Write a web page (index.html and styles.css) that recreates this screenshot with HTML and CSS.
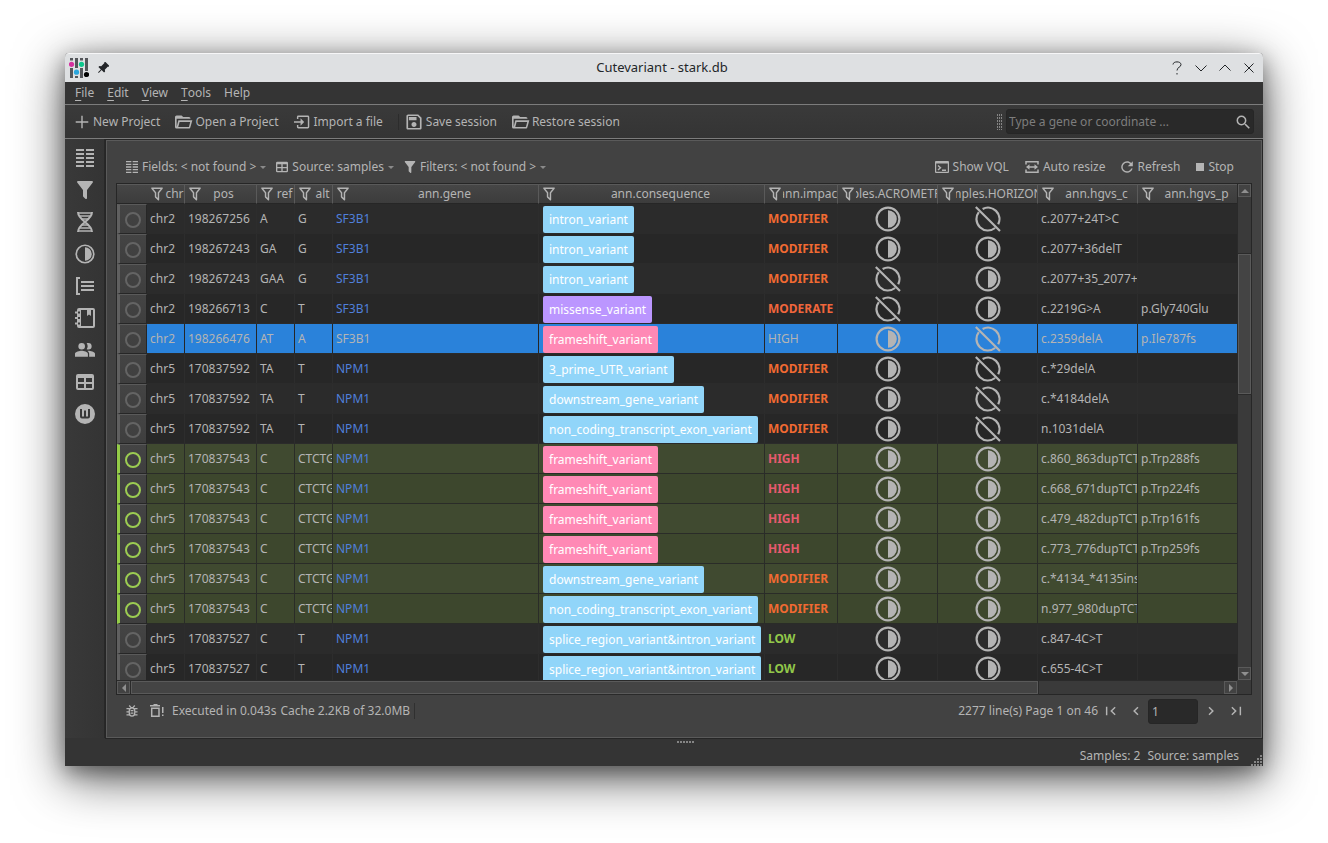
FILE: index.html
```html
<!DOCTYPE html>
<html lang="en">
<head>
<meta charset="utf-8">
<title>Cutevariant - stark.db</title>
<link rel="stylesheet" href="styles.css">
</head>
<body>
<svg class="sprite" aria-hidden="true">
  <symbol id="i-plus" viewBox="2 2 20 20"><path d="M21 13H13V21H11V13H3V11H11V3H13V11H21Z"/></symbol>
  <symbol id="i-folder" viewBox="2 1 22 22"><path d="M6.1,10L4,18V8H21A2,2 0 0,0 19,6H12L10,4H4A2,2 0 0,0 2,6V18A2,2 0 0,0 4,20H19C19.9,20 20.6,19.4 20.8,18.5L23.2,10H6.1M19,18H6L7.6,12H20.6L19,18Z"/></symbol>
  <symbol id="i-import" viewBox="1 1 22 22"><path d="M15,12L10,7V11H1V13H10V17M22,19V5C22,3.9 21.1,3 20,3H7A2,2 0 0,0 5,5V8H7V5H20V19H7V16H5V19A2,2 0 0,0 7,21H20A2,2 0 0,0 22,19Z"/></symbol>
  <symbol id="i-save" viewBox="2.500 2.500 19 19"><path d="M17 3H5C3.89 3 3 3.9 3 5V19C3 20.1 3.89 21 5 21H19C20.1 21 21 20.1 21 19V7L17 3M19 19H5V5H16.17L19 7.83V19M12 12C10.34 12 9 13.34 9 15S10.34 18 12 18 15 16.66 15 15 13.66 12 12 12M6 6H15V10H6V6Z"/></symbol>
  <symbol id="i-filter" viewBox="0 0 24 24"><path d="M14,12V19.88C14.04,20.18 13.94,20.5 13.71,20.71C13.32,21.1 12.69,21.1 12.3,20.71L10.29,18.7C10.06,18.47 9.96,18.16 10,17.87V12H9.97L4.21,4.62C3.87,4.19 3.95,3.56 4.38,3.22C4.57,3.08 4.78,3 5,3H19C19.22,3 19.43,3.08 19.62,3.22C20.05,3.56 20.13,4.19 19.79,4.62L14.03,12H14Z"/></symbol>
  <symbol id="i-funnel" viewBox="1 1 22 22"><path d="M15,19.88C15.04,20.18 14.94,20.5 14.71,20.71C14.32,21.1 13.69,21.1 13.3,20.71L9.29,16.7C9.06,16.47 8.96,16.16 9,15.87V10.75L4.21,4.62C3.87,4.19 3.95,3.56 4.38,3.22C4.57,3.08 4.78,3 5,3H19C19.22,3 19.43,3.08 19.62,3.22C20.05,3.56 20.13,4.19 19.79,4.62L15,10.75V19.88M7.04,5L11,10.06V15.58L13,17.58V10.05L16.96,5H7.04Z"/></symbol>
  <symbol id="i-fields" viewBox="0 0 18 18"><path d="M0 0H8V2H0ZM0 4H8V6H0ZM0 8H8V10H0ZM0 12H8V14H0ZM0 16H8V18H0ZM10 0H18V2H10ZM10 4H18V6H10ZM10 8H18V10H10ZM10 12H18V14H10ZM10 16H18V18H10Z"/></symbol>
  <symbol id="i-table" viewBox="0 0 18 16"><path fill-rule="evenodd" d="M2 0H16A2 2 0 0 1 18 2V14A2 2 0 0 1 16 16H2A2 2 0 0 1 0 14V2A2 2 0 0 1 2 0ZM2 4V8H8V4ZM10 4V8H16V4ZM2 10V14H8V10ZM10 10V14H16V10Z"/></symbol>
  <symbol id="i-dna" viewBox="0 0 20 22"><g fill="none" stroke="currentColor" stroke-width="2"><path d="M3 1C3 10 17 12 17 21M17 1C17 10 3 12 3 21"/><path stroke-width="1.4" d="M3 2H17M4 5H16M6 8H14M6 14H14M4 17H16M3 20H17"/></g></symbol>
  <symbol id="i-half" viewBox="0 0 26 26"><circle cx="13" cy="13" r="11.4" fill="none" stroke="currentColor" stroke-width="2.2"/><path d="M13 4.2A8.8 8.8 0 0 1 13 21.8Z"/></symbol>
  <symbol id="i-none" viewBox="0 0 26 26"><path fill="none" stroke="currentColor" stroke-width="2.2" d="M.8 1L25 25M7.6 3A11.4 11.4 0 0 1 23.2 18.2M3.8 6.2A11.4 11.4 0 0 0 20 22"/></symbol>
  <symbol id="i-group" viewBox="0 0 18 18"><path d="M0 0H4V2H2V16H4V18H0ZM5 4H18V6H5ZM5 8H18V10H5ZM5 12H18V14H5Z"/></symbol>
  <symbol id="i-book" viewBox="0 0 20 20"><path fill-rule="evenodd" d="M4 0H18A2 2 0 0 1 20 2V18A2 2 0 0 1 18 20H4A2 2 0 0 1 2 18V16.5H0V14.5H2V11H0V9H2V5.5H0V3.5H2V2A2 2 0 0 1 4 0ZM6 2V18H18V2H16V8L14 6.5L12 8V2ZM3 3.500V5.500H5V3.500ZM3 9V11H5V9ZM3 14.500V16.500H5V14.500Z"/></symbol>
  <symbol id="i-people" viewBox="0 0 24 24"><path d="M16,13C15.71,13 15.38,13 15.03,13.05C16.19,13.89 17,15 17,16.5V20H24V16.5C24,14.17 18.33,13 16,13M8,13C5.67,13 0,14.17 0,16.5V20H15.500V16.5C15.500,14.17 10.33,13 8,13M8,11.500A4,4 0 1,0 8,3.500A4,4 0 1,0 8,11.500M16,11.500A4,4 0 0,0 16,3.500C15.400,3.500 14.600,3.700 14,4C15.600,6.200 15.600,8.800 14,11C14.600,11.300 15.400,11.500 16,11.500Z"/></symbol>
  <symbol id="i-wordset" viewBox="0 0 20 20"><path fill-rule="evenodd" d="M10 0A10 10 0 1 1 10 20A10 10 0 1 1 10 0ZM5 5V12.500A2 2 0 0 0 7 14.500H13A2 2 0 0 0 15 12.500V5H13V12.500H11V6.500H9V12.500H7V5Z"/></symbol>
  <symbol id="i-console" viewBox="0 0 14 12"><path fill-rule="evenodd" d="M1 0H13A1 1 0 0 1 14 1V11A1 1 0 0 1 13 12H1A1 1 0 0 1 0 11V1A1 1 0 0 1 1 0ZM1.200 2.500V10.800H12.800V2.500Z"/><path fill="none" stroke="currentColor" stroke-width="1.400" d="M3 4.500L5.500 6.700L3 9M7 9.300H11"/></symbol>
  <symbol id="i-resize" viewBox="0 0 14 12"><path fill="none" stroke="currentColor" stroke-width="1.500" d="M1 3.500V.8H13V3.500M1 8.500V11.200H13V8.500M3 6H11"/><path d="M1 6L4.500 3.300V8.700ZM13 6L9.500 3.300V8.700Z"/></symbol>
  <symbol id="i-refresh" viewBox="1 1 22 22"><path d="M17.65,6.35C16.2,4.9 14.21,4 12,4A8,8 0 0,0 4,12A8,8 0 0,0 12,20C15.73,20 18.84,17.45 19.73,14H17.65C16.83,16.33 14.61,18 12,18A6,6 0 0,1 6,12A6,6 0 0,1 12,6C13.66,6 15.14,6.69 16.22,7.78L13,11H20V4L17.65,6.35Z"/></symbol>
  <symbol id="i-search" viewBox="1 1 21 21"><path d="M9.5,3A6.5,6.5 0 0,1 16,9.5C16,11.11 15.41,12.59 14.44,13.73L14.71,14H15.5L20.5,19L19,20.5L14,15.5V14.71L13.73,14.44C12.59,15.41 11.11,16 9.5,16A6.5,6.5 0 0,1 3,9.5A6.5,6.5 0 0,1 9.5,3M9.5,5C7,5 5,7 5,9.5C5,12 7,14 9.5,14C12,14 14,12 14,9.5C14,7 12,5 9.5,5Z"/></symbol>
  <symbol id="i-bug" viewBox="0.500 0.500 13 13"><path fill="none" stroke="currentColor" stroke-width="1.400" d="M7 3.500C9.500 3.500 10 5 10 7V9C10 11.500 9 12.500 7 12.500S4 11.500 4 9V7C4 5 4.500 3.500 7 3.500ZM4 1L6 3.300M10 1L8 3.300M1 4.500H4M1 8H4M1 11.300H4M10 4.500H13M10 8H13M10 11.300H13M5.500 6.700H8.500M5.500 9.300H8.500"/></symbol>
  <symbol id="i-trash" viewBox="0 0 14 14"><path d="M0 1H3L4 0H7L8 1H10V2.500H0ZM12 3H13.500V9H12ZM12 10.500H13.500V12H12Z"/><path fill="none" stroke="currentColor" stroke-width="1.500" d="M1.700 4.200H9V12.200H1.700Z"/></symbol>
  <symbol id="i-prev" viewBox="1 1 22 22"><path d="M15.41,16.58L10.83,12L15.41,7.41L14,6L8,12L14,18L15.41,16.58Z"/></symbol>
  <symbol id="i-next" viewBox="1 1 22 22"><path d="M8.59,16.58L13.17,12L8.59,7.41L10,6L16,12L10,18L8.59,16.58Z"/></symbol>
  <symbol id="i-first" viewBox="1 1 22 22"><path d="M18.41,16.59L13.82,12L18.41,7.41L17,6L11,12L17,18L18.41,16.59M5,6H7V18H5V6Z"/></symbol>
  <symbol id="i-last" viewBox="1 1 22 22"><path d="M5.59,7.41L10.18,12L5.59,16.59L7,18L13,12L7,6L5.59,7.41M17,6H19V18H17V6Z"/></symbol>
  <symbol id="i-pin" viewBox="0 0 24 24"><path transform="rotate(45 12 12)" d="M17,12V3H18V0H6V3H7V12L4,14V17H11V25H13V17H20V14L17,12Z"/></symbol>
</svg>

<div class="window">
  <header class="titlebar">
    <div class="title-left">
      <svg class="logo" viewBox="0 0 20 20"><path fill="#54565a" d="M1 0H4V20H1ZM6 0H9V20H6ZM11 0H14V20H11ZM16 0H19V20H16Z"/><path fill="#dee0e2" d="M0 2.500H5V10H0ZM5 10H10V18H5ZM10 2.500H15V10H10ZM15 13H20V20H15Z"/><circle cx="2.500" cy="6.300" r="2.600" fill="#d6309f"/><circle cx="7.500" cy="14.200" r="2.600" fill="#2aa5dc"/><circle cx="12.500" cy="6.300" r="2.600" fill="#0dc78d"/><circle cx="17.500" cy="16.500" r="2.600" fill="#000"/></svg>
      <svg class="pin"><use href="#i-pin"/></svg>
    </div>
    <h1 class="title">Cutevariant - stark.db</h1>
    <div class="title-buttons">
      <button aria-label="Help"><svg viewBox="0 0 12 14"><path d="M2 3.500C2 0 10 0 10 3.500C10 6.500 6 6 6 9.500M6 12V13.500"/></svg></button>
      <button aria-label="Minimize"><svg viewBox="0 0 12 14"><path d="M.5 4.500L6 10L11.500 4.500"/></svg></button>
      <button aria-label="Maximize"><svg viewBox="0 0 12 14"><path d="M.5 9.500L6 4L11.500 9.500"/></svg></button>
      <button aria-label="Close"><svg viewBox="0 0 12 14"><path d="M1.500 2.500L10.500 11.500M10.500 2.500L1.500 11.500"/></svg></button>
    </div>
  </header>

  <nav class="menubar">
    <button><u>F</u>ile</button><button><u>E</u>dit</button><button><u>V</u>iew</button><button><u>T</u>ools</button><button>Help</button>
  </nav>

  <div class="toolbar">
    <button><svg class="ic14"><use href="#i-plus"/></svg>New Project</button>
    <button class="wide"><svg class="ic18"><use href="#i-folder"/></svg>Open a Project</button>
    <button><svg class="ic16"><use href="#i-import"/></svg>Import a file</button>
    <span class="sep"></span>
    <button><svg class="ic16"><use href="#i-save"/></svg>Save session</button>
    <button class="wide"><svg class="ic18"><use href="#i-folder"/></svg>Restore session</button>
    <span class="grip"></span>
    <label class="search"><input type="text" aria-label="Search gene or coordinate" placeholder="Type a gene or coordinate ..."><svg class="ic16"><use href="#i-search"/></svg></label>
  </div>

  <div class="workspace">
    <aside class="sidebar">
      <button aria-label="Fields"><svg class="ic18"><use href="#i-fields"/></svg></button>
      <button aria-label="Filters"><svg class="ic24"><use href="#i-filter"/></svg></button>
      <button aria-label="Variants"><svg class="ic20"><use href="#i-dna"/></svg></button>
      <button aria-label="Genotypes"><svg class="ic20"><use href="#i-half"/></svg></button>
      <button aria-label="Group by"><svg class="ic18"><use href="#i-group"/></svg></button>
      <button aria-label="History"><svg class="ic20"><use href="#i-book"/></svg></button>
      <button aria-label="Samples"><svg class="ic20"><use href="#i-people"/></svg></button>
      <button aria-label="Source"><svg class="ic18"><use href="#i-table"/></svg></button>
      <button aria-label="Wordsets"><svg class="ic20"><use href="#i-wordset"/></svg></button>
    </aside>

    <main class="panel">
      <div class="viewbar">
        <button class="drop"><svg class="ic12"><use href="#i-fields"/></svg>Fields: &lt; not found &gt;</button>
        <button class="drop"><svg class="ic12"><use href="#i-table"/></svg>Source: samples</button>
        <button class="drop"><svg class="ic16 snug"><use href="#i-filter"/></svg>Filters: &lt; not found &gt;</button>
        <span class="fill"></span>
        <button><svg class="ic14"><use href="#i-console"/></svg>Show VQL</button>
        <button><svg class="ic14"><use href="#i-resize"/></svg>Auto resize</button>
        <button><svg class="ic16 snug"><use href="#i-refresh"/></svg>Refresh</button>
        <button><svg class="ic8" viewBox="0 0 8 8"><path d="M0 0H8V8H0Z"/></svg>Stop</button>
      </div>

      <div class="grid">
        <div class="table-view">
          <table>
            <colgroup><col class="c-mark"><col class="c-s"><col class="c-pos"><col class="c-s"><col class="c-s"><col class="c-gene"><col class="c-cons"><col class="c-imp"><col class="c-m"><col class="c-m"><col class="c-m"><col class="c-m"></colgroup>
            <thead><tr>
              <td></td>
              <th><div class="h"><svg class="ic16"><use href="#i-funnel"/></svg><span>chr</span></div></th>
              <th><div class="h sorted"><svg class="ic16"><use href="#i-funnel"/></svg><span>pos</span></div></th>
              <th><div class="h"><svg class="ic16"><use href="#i-funnel"/></svg><span>ref</span></div></th>
              <th><div class="h"><svg class="ic16"><use href="#i-funnel"/></svg><span>alt</span></div></th>
              <th><div class="h"><svg class="ic16"><use href="#i-funnel"/></svg><span>ann.gene</span></div></th>
              <th><div class="h"><svg class="ic16"><use href="#i-funnel"/></svg><span>ann.consequence</span></div></th>
              <th><div class="h"><svg class="ic16"><use href="#i-funnel"/></svg><span>ann.impact</span></div></th>
              <th><div class="h"><svg class="ic16"><use href="#i-funnel"/></svg><span>ples.ACROMETR</span></div></th>
              <th><div class="h"><svg class="ic16"><use href="#i-funnel"/></svg><span>mples.HORIZON</span></div></th>
              <th><div class="h"><svg class="ic16"><use href="#i-funnel"/></svg><span>ann.hgvs_c</span></div></th>
              <th><div class="h"><svg class="ic16"><use href="#i-funnel"/></svg><span>ann.hgvs_p</span></div></th>
            </tr></thead>
            <tbody>
              <tr><th><i></i></th><td>chr2</td><td>198267256</td><td>A</td><td>G</td><td class="gene">SF3B1</td><td class="cons"><span>intron_variant</span></td><td class="modifier">MODIFIER</td><td class="gt"><svg><use href="#i-half"/></svg></td><td class="gt"><svg><use href="#i-none"/></svg></td><td>c.2077+24T&gt;C</td><td></td></tr>
              <tr><th><i></i></th><td>chr2</td><td>198267243</td><td>GA</td><td>G</td><td class="gene">SF3B1</td><td class="cons"><span>intron_variant</span></td><td class="modifier">MODIFIER</td><td class="gt"><svg><use href="#i-half"/></svg></td><td class="gt"><svg><use href="#i-half"/></svg></td><td>c.2077+36delT</td><td></td></tr>
              <tr><th><i></i></th><td>chr2</td><td>198267243</td><td>GAA</td><td>G</td><td class="gene">SF3B1</td><td class="cons"><span>intron_variant</span></td><td class="modifier">MODIFIER</td><td class="gt"><svg><use href="#i-none"/></svg></td><td class="gt"><svg><use href="#i-half"/></svg></td><td>c.2077+35_2077+3</td><td></td></tr>
              <tr><th><i></i></th><td>chr2</td><td>198266713</td><td>C</td><td>T</td><td class="gene">SF3B1</td><td class="cons"><span class="missense">missense_variant</span></td><td class="moderate">MODERATE</td><td class="gt"><svg><use href="#i-none"/></svg></td><td class="gt"><svg><use href="#i-half"/></svg></td><td>c.2219G&gt;A</td><td>p.Gly740Glu</td></tr>
              <tr class="selected"><th><i></i></th><td>chr2</td><td>198266476</td><td>AT</td><td>A</td><td class="gene">SF3B1</td><td class="cons"><span class="frameshift">frameshift_variant</span></td><td>HIGH</td><td class="gt"><svg><use href="#i-half"/></svg></td><td class="gt"><svg><use href="#i-none"/></svg></td><td>c.2359delA</td><td>p.Ile787fs</td></tr>
              <tr><th><i></i></th><td>chr5</td><td>170837592</td><td>TA</td><td>T</td><td class="gene">NPM1</td><td class="cons"><span>3_prime_UTR_variant</span></td><td class="modifier">MODIFIER</td><td class="gt"><svg><use href="#i-half"/></svg></td><td class="gt"><svg><use href="#i-none"/></svg></td><td>c.*29delA</td><td></td></tr>
              <tr><th><i></i></th><td>chr5</td><td>170837592</td><td>TA</td><td>T</td><td class="gene">NPM1</td><td class="cons"><span>downstream_gene_variant</span></td><td class="modifier">MODIFIER</td><td class="gt"><svg><use href="#i-half"/></svg></td><td class="gt"><svg><use href="#i-none"/></svg></td><td>c.*4184delA</td><td></td></tr>
              <tr><th><i></i></th><td>chr5</td><td>170837592</td><td>TA</td><td>T</td><td class="gene">NPM1</td><td class="cons"><span>non_coding_transcript_exon_variant</span></td><td class="modifier">MODIFIER</td><td class="gt"><svg><use href="#i-half"/></svg></td><td class="gt"><svg><use href="#i-none"/></svg></td><td>n.1031delA</td><td></td></tr>
              <tr class="fav"><th><i></i></th><td>chr5</td><td>170837543</td><td>C</td><td>CTCTG</td><td class="gene">NPM1</td><td class="cons"><span class="frameshift">frameshift_variant</span></td><td class="high">HIGH</td><td class="gt"><svg><use href="#i-half"/></svg></td><td class="gt"><svg><use href="#i-half"/></svg></td><td>c.860_863dupTCTG</td><td>p.Trp288fs</td></tr>
              <tr class="fav"><th><i></i></th><td>chr5</td><td>170837543</td><td>C</td><td>CTCTG</td><td class="gene">NPM1</td><td class="cons"><span class="frameshift">frameshift_variant</span></td><td class="high">HIGH</td><td class="gt"><svg><use href="#i-half"/></svg></td><td class="gt"><svg><use href="#i-half"/></svg></td><td>c.668_671dupTCTG</td><td>p.Trp224fs</td></tr>
              <tr class="fav"><th><i></i></th><td>chr5</td><td>170837543</td><td>C</td><td>CTCTG</td><td class="gene">NPM1</td><td class="cons"><span class="frameshift">frameshift_variant</span></td><td class="high">HIGH</td><td class="gt"><svg><use href="#i-half"/></svg></td><td class="gt"><svg><use href="#i-half"/></svg></td><td>c.479_482dupTCTG</td><td>p.Trp161fs</td></tr>
              <tr class="fav"><th><i></i></th><td>chr5</td><td>170837543</td><td>C</td><td>CTCTG</td><td class="gene">NPM1</td><td class="cons"><span class="frameshift">frameshift_variant</span></td><td class="high">HIGH</td><td class="gt"><svg><use href="#i-half"/></svg></td><td class="gt"><svg><use href="#i-half"/></svg></td><td>c.773_776dupTCTG</td><td>p.Trp259fs</td></tr>
              <tr class="fav"><th><i></i></th><td>chr5</td><td>170837543</td><td>C</td><td>CTCTG</td><td class="gene">NPM1</td><td class="cons"><span>downstream_gene_variant</span></td><td class="modifier">MODIFIER</td><td class="gt"><svg><use href="#i-half"/></svg></td><td class="gt"><svg><use href="#i-half"/></svg></td><td>c.*4134_*4135insT</td><td></td></tr>
              <tr class="fav"><th><i></i></th><td>chr5</td><td>170837543</td><td>C</td><td>CTCTG</td><td class="gene">NPM1</td><td class="cons"><span>non_coding_transcript_exon_variant</span></td><td class="modifier">MODIFIER</td><td class="gt"><svg><use href="#i-half"/></svg></td><td class="gt"><svg><use href="#i-half"/></svg></td><td>n.977_980dupTCTG</td><td></td></tr>
              <tr><th><i></i></th><td>chr5</td><td>170837527</td><td>C</td><td>T</td><td class="gene">NPM1</td><td class="cons"><span>splice_region_variant&amp;intron_variant</span></td><td class="low">LOW</td><td class="gt"><svg><use href="#i-half"/></svg></td><td class="gt"><svg><use href="#i-half"/></svg></td><td>c.847-4C&gt;T</td><td></td></tr>
              <tr><th><i></i></th><td>chr5</td><td>170837527</td><td>C</td><td>T</td><td class="gene">NPM1</td><td class="cons"><span>splice_region_variant&amp;intron_variant</span></td><td class="low">LOW</td><td class="gt"><svg><use href="#i-half"/></svg></td><td class="gt"><svg><use href="#i-half"/></svg></td><td>c.655-4C&gt;T</td><td></td></tr>
            </tbody>
          </table>
        </div>
        <div class="vscroll">
          <button aria-label="Scroll up"><svg viewBox="0 0 8 4"><path d="M4 0L8 4H0Z"/></svg></button>
          <div class="vtrack"><div class="vthumb"></div></div>
          <button aria-label="Scroll down"><svg viewBox="0 0 8 4"><path d="M4 4L8 0H0Z"/></svg></button>
        </div>
        <div class="hscroll">
          <button aria-label="Scroll left"><svg viewBox="0 0 4 8"><path d="M0 4L4 0V8Z"/></svg></button>
          <div class="htrack"><div class="hthumb"></div></div>
          <button aria-label="Scroll right"><svg viewBox="0 0 4 8"><path d="M4 4L0 0V8Z"/></svg></button>
        </div>
        <div class="corner"></div>
      </div>

      <div class="footer">
        <button class="debug" aria-label="Debug"><svg class="ic12"><use href="#i-bug"/></svg></button>
        <button class="clear" aria-label="Clear cache"><svg class="ic14"><use href="#i-trash"/></svg></button>
        <span class="timing">Executed in 0.043s</span>
        <span class="cache">Cache 2.2KB of 32.0MB</span>
        <span class="fill"></span>
        <span>2277 line(s) Page 1 on 46</span>
        <button class="page" aria-label="First page"><svg class="ic16"><use href="#i-first"/></svg></button>
        <button class="page" aria-label="Previous page"><svg class="ic16"><use href="#i-prev"/></svg></button>
        <input class="page-no" type="text" aria-label="Page" value="1">
        <button class="page" aria-label="Next page"><svg class="ic16"><use href="#i-next"/></svg></button>
        <button class="page" aria-label="Last page"><svg class="ic16"><use href="#i-last"/></svg></button>
      </div>
    </main>
  </div>

  <div class="splitter"><span></span></div>
  <footer class="statusbar"><span>Samples: 2</span><span>Source: samples</span>
    <svg class="sizegrip" viewBox="0 0 12 12"><path d="M0 10H2V12H0ZM3 10H5V12H3ZM6 10H8V12H6ZM9 10H11V12H9ZM3 7H5V9H3ZM6 7H8V9H6ZM9 7H11V9H9ZM6 4H8V6H6ZM9 4H11V6H9ZM9 1H11V3H9Z"/></svg>
  </footer>
</div>
</body>
</html>
```
FILE: styles.css
```css
* { box-sizing: border-box; }
body {
  margin: 0;
  height: 100vh;
  padding: 53px 65px 77px;
  background: #fff;
  color: #b4b4b4;
  font: 12px/16px "Noto Sans", sans-serif;
  overflow: hidden;
}
.sprite { position: absolute; width: 0; height: 0; }
svg { fill: currentColor; flex: none; display: block; }
button {
  display: flex;
  align-items: center;
  margin: 0;
  padding: 0;
  border: 0;
  background: none;
  color: inherit;
  font: inherit;
  white-space: nowrap;
}
.ic8 { width: 8px; height: 8px; }
.ic12 { width: 12px; height: 12px; }
.ic14 { width: 14px; height: 14px; }
.ic16 { width: 16px; height: 16px; }
.ic18 { width: 18px; height: 18px; }
.ic20 { width: 20px; height: 20px; }
.ic24 { width: 24px; height: 24px; }

.window {
  display: flex;
  flex-direction: column;
  height: 100%;
  background: #343434;
  border-radius: 4px 4px 0 0;
  box-shadow: 0 12px 50px rgba(0, 0, 0, .65), 0 6px 20px rgba(0, 0, 0, .35);
}

.titlebar {
  display: grid;
  grid-template-columns: 1fr auto 1fr;
  align-items: center;
  height: 29px;
  padding: 0 8px 0 4px;
  border-top: 1px solid #f6f6f7;
  border-radius: 4px 4px 0 0;
  background: #dee0e2;
  color: #232629;
}
.title-left { display: flex; align-items: center; gap: 8px; }
.logo { width: 20px; height: 20px; }
.pin { width: 12px; height: 12px; }
.title { margin: 0 0 2px; font-size: 13px; font-weight: 400; line-height: 18px; }
.title-buttons { display: flex; justify-content: flex-end; gap: 12px; }
.title-buttons svg { width: 12px; height: 14px; fill: none; stroke: currentColor; }

.menubar {
  display: flex;
  gap: 13px;
  height: 23px;
  padding: 0 10px;
  border-bottom: 1px solid #7c7c7c;
}
.menubar u { text-underline-offset: 3px; }

.toolbar {
  display: flex;
  align-items: center;
  gap: 15px;
  height: 34px;
  padding: 0 9px 0 10px;
  border-bottom: 1px solid #7c7c7c;
  background: linear-gradient(#3a3a3a, #343434);
}
.toolbar button { gap: 4px; }
.toolbar .wide { gap: 2px; }
.sep { width: 1px; height: 16px; margin-right: -8px; background: #2c2c2c; }
.grip {
  width: 6px;
  height: 17px;
  margin: 0 -12px 0 auto;
  background:
    repeating-linear-gradient(#383838 0 1px, transparent 1px 3px),
    repeating-linear-gradient(90deg, #858585 0 1px, #383838 1px 2px);
}
.search {
  display: flex;
  align-items: center;
  width: 248px;
  height: 25px;
  padding: 0 2px;
  border: 1px solid #262626;
  border-radius: 3px;
  background: #292929;
}
.search input {
  flex: 1;
  min-width: 0;
  padding: 0;
  border: 0;
  background: none;
  color: inherit;
  font: inherit;
}
.search input::placeholder { color: #7d7d7d; opacity: 1; }

.workspace { display: flex; flex: 1; min-height: 0; }
.sidebar {
  display: flex;
  flex-direction: column;
  width: 40px;
  padding-top: 3px;
  background: linear-gradient(90deg, #393939, #343434);
  border-right: 1px solid #282828;
}
.sidebar button { justify-content: center; height: 32px; }
.sidebar .ic20 { height: 22px; }

.panel {
  display: flex;
  flex: 1;
  flex-direction: column;
  min-width: 0;
  margin: 1px 1px 0;
  border: 1px solid #5a5a5a;
  background: #424242;
  outline: 1px solid #262626;
}
.viewbar {
  display: flex;
  align-items: center;
  gap: 16px;
  height: 42px;
  padding: 10px 27px 0 19px;
}
.viewbar button { gap: 4px; }
.viewbar .drop { margin-right: -6px; }
.drop::after, .sorted::after {
  content: "";
  border: 3px solid transparent;
  border-top-color: #8a8a8a;
  border-bottom: 0;
}
.snug { margin: 0 -2px; }
.fill { flex: 1; }

.grid {
  display: grid;
  flex: 1;
  grid-template-columns: 1fr 14px;
  grid-template-rows: 1fr 14px;
  min-height: 0;
  margin: 0 9px;
  border: 1px solid #262626;
}
.table-view { min-width: 0; min-height: 0; overflow: hidden; background: #282828; }
table { width: 100%; table-layout: fixed; border-collapse: separate; border-spacing: 0; }
.c-mark { width: 30px; }
.c-s { width: 38px; }
.c-pos { width: 72px; }
.c-gene { width: 206px; }
.c-cons { width: 226px; }
.c-imp { width: 73px; }
.c-m { width: 100px; }
thead th, thead td {
  height: 20px;
  padding: 0;
  border-top: 1px solid #5a5a5a;
  border-right: 1px solid #5a5a5a;
  border-bottom: 1px solid #262626;
  background: linear-gradient(#464646, #3c3c3c);
  font-weight: 400;
}
thead td { border-right: 0; }
.h { display: flex; align-items: center; height: 18px; padding-left: 2px; }
.h span { display: flex; flex: 1; justify-content: center; min-width: 0; overflow: hidden; white-space: nowrap; }
.sorted::after { margin: 0 4px 0 0; border-width: 0 4px 4px; border-color: transparent transparent #8a8a8a; }

tbody td {
  height: 30px;
  padding: 0 0 0 3px;
  overflow: hidden;
  border-right: 1px solid #2d2d2d;
  border-bottom: 1px solid #2b2b2b;
  background: #2b2b2b;
  white-space: nowrap;
}
tbody tr:nth-child(even) td { background: #272727; }
tbody th {
  padding: 2px 0 0;
  border-top: 1px solid #5a5a5a;
  border-right: 1px solid #262626;
  border-bottom: 1px solid #262626;
  border-left: 3px solid #606060;
  background: linear-gradient(#444, #3e3e3e);
}
tbody th i { display: block; width: 16px; height: 16px; margin: 0 auto; border: 2px solid #646464; border-radius: 50%; }
tbody .gene { color: #5080dc; }
tbody .cons { padding: 2px 0 0 4px; }
.cons span {
  display: block;
  width: fit-content;
  height: 27px;
  padding: 0 6px;
  border-radius: 2px;
  background: #91d5f9;
  color: #fff;
  line-height: 27px;
}
.cons .missense { background: #bb96ff; }
.cons .frameshift { background: #ff89b5; }
.modifier, .moderate, .high, .low { font-weight: 700; }
.modifier { color: #f06a32; }
.moderate { color: #f0663c; }
.high { color: #e65a6e; }
.low { color: #92c84a; }
tbody .gt { padding: 0; }
.gt svg { width: 26px; height: 26px; margin: 0 auto; }
tbody .fav td, tbody .fav:nth-child(even) td { border-color: #2a2c28; background: #404a30; }
tbody .fav:nth-child(even) td { background: #3d472d; }
tbody .fav th { border-left-color: #94cc48; }
tbody .fav th i { border-color: #9ccc52; }
tbody .selected td { border-right-color: #262626; background: #2a82da; }
tbody .selected .gene { color: #b4b4b4; }

.vscroll, .hscroll { display: flex; background: #3a3a3a; }
.vscroll { flex-direction: column; border-left: 1px solid #2a2a2a; }
.hscroll { border-top: 1px solid #2a2a2a; }
.vscroll button, .hscroll button {
  flex: none;
  justify-content: center;
  width: 13px;
  height: 13px;
  border: 1px solid #5a5a5a;
  background: #424242;
  color: #8f8f8f;
}
.vscroll button svg { width: 8px; height: 4px; }
.hscroll button svg { width: 4px; height: 8px; }
.vtrack { flex: 1; padding-top: 57px; }
.vthumb { height: 34%; border: 1px solid #5a5a5a; background: #444; outline: 1px solid #2a2a2a; }
.htrack { flex: 1; padding-left: 1px; }
.hthumb { width: 83%; height: 100%; border: 1px solid #5a5a5a; background: #444; outline: 1px solid #2a2a2a; }
.corner { background: #3a3a3a; }

.footer { display: flex; align-items: center; height: 42px; padding: 0 13px 10px 19px; }
.footer .debug { margin-right: 12px; }
.footer .clear { margin-right: 8px; }
.footer .timing { margin-right: 4px; }
.footer .cache { padding-right: 4px; border-right: 1px solid #303030; }
.footer .page { justify-content: center; width: 25px; }
.page-no {
  width: 50px;
  height: 25px;
  padding: 0 3px;
  border: 1px solid #262626;
  border-radius: 3px;
  background: #292929;
  color: inherit;
  font: inherit;
}

.splitter { display: flex; justify-content: center; align-items: center; height: 8px; padding-left: 43px; }
.splitter span { width: 18px; height: 2px; background: repeating-linear-gradient(90deg, #858585 0 2px, transparent 2px 3px); }
.statusbar { display: flex; justify-content: flex-end; gap: 7px; height: 20px; padding: 2px 0 0; }
.sizegrip { width: 12px; height: 12px; margin: 6px 0 0 5px; color: #858585; }
```
